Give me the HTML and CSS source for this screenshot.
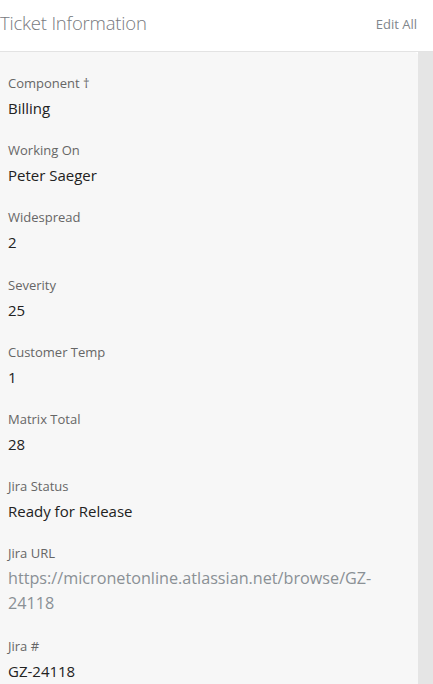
FILE: index.html
```html
<!DOCTYPE html>
<html>
<head>
<meta charset="utf-8">
<link rel="stylesheet" href="styles.css">
</head>
<body>
<div class="page">
  <header class="header">
    <h1 class="title">Ticket Information</h1>
    <a class="edit-all">Edit All</a>
  </header>
  <div class="body">
    <div class="panel">
      <div class="field"><div class="label">Component †</div><div class="value">Billing</div></div>
      <div class="field"><div class="label">Working On</div><div class="value">Peter Saeger</div></div>
      <div class="field"><div class="label">Widespread</div><div class="value">2</div></div>
      <div class="field"><div class="label">Severity</div><div class="value">25</div></div>
      <div class="field"><div class="label">Customer Temp</div><div class="value">1</div></div>
      <div class="field"><div class="label">Matrix Total</div><div class="value">28</div></div>
      <div class="field"><div class="label">Jira Status</div><div class="value">Ready for Release</div></div>
      <div class="field"><div class="label">Jira URL</div><div class="value link">https://micronetonline.atlassian.net/browse/GZ-24118</div></div>
      <div class="field"><div class="label">Jira #</div><div class="value">GZ-24118</div></div>
    </div>
    <div class="track"></div>
  </div>
</div>
</body>
</html>
```
FILE: styles.css
```css
html, body {
  margin: 0;
  padding: 0;
  background: #ffffff;
  font-family: "Open Sans", "Noto Sans", sans-serif;
}
.page {
  width: 433px;
  height: 684px;
  overflow: hidden;
  display: flex;
  flex-direction: column;
}
.header {
  height: 51px;
  flex: none;
  display: flex;
  align-items: center;
  justify-content: space-between;
  border-bottom: 1px solid #e3e3e3;
  padding: 0 16px 0 0;
  box-sizing: content-box;
}
.title {
  margin: 0;
  margin-top: -6px;
  font-size: 18.5px;
  font-weight: 300;
  color: #777a7e;
  letter-spacing: -0.2px;
}
.edit-all {
  font-size: 13px;
  color: #80868c;
  margin-top: -4px;
}
.body {
  flex: 1;
  display: flex;
}
.panel {
  width: 418px;
  background: #f7f7f7;
  border-top-right-radius: 4px;
  padding: 21px 8px 0 8px;
  box-sizing: border-box;
}
.track {
  flex: 1;
  background: #e5e5e5;
}
.field {
  margin-bottom: 20.2px;
}
.label {
  font-size: 13px;
  line-height: 20px;
  color: #666666;
}
.value {
  margin-top: 3px;
  font-size: 15px;
  line-height: 24px;
  color: #222222;
}
.value.link {
  font-size: 16.2px;
  color: #8a9095;
  line-height: 24.5px;
}
```
